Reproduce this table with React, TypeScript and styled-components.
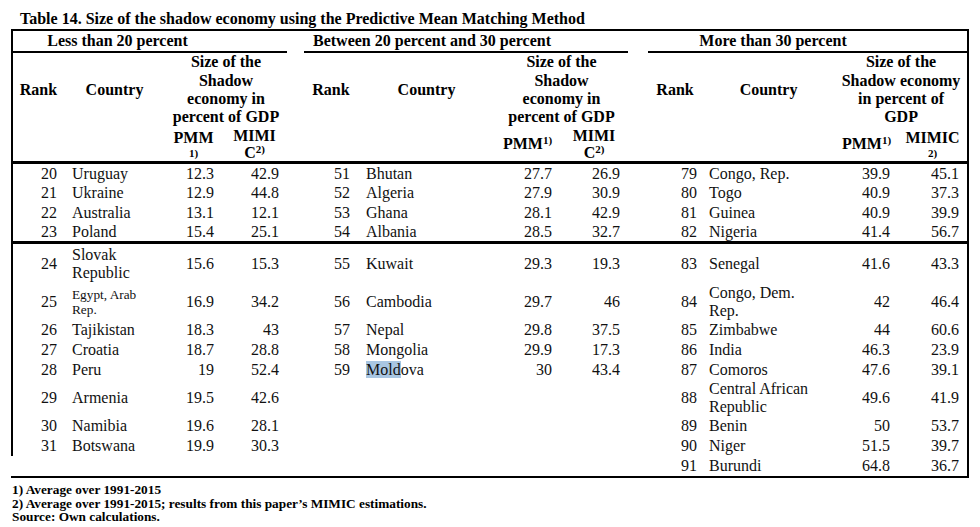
import { Fragment } from 'react';
import styled, { createGlobalStyle } from 'styled-components';

const GlobalStyle = createGlobalStyle`
  html, body {
    margin: 0;
    padding: 0;
    background: #ffffff;
  }
  body {
    font-family: "Liberation Serif", "Times New Roman", serif;
    color: #000000;
  }
`;

const Page = styled.div`
  width: 980px;
  height: 527px;
  padding: 10px 0 0 11px;
  box-sizing: border-box;
  overflow: hidden;
`;

const Title = styled.div`
  font-weight: bold;
  font-size: 16px;
  line-height: 18px;
  height: 19px;
  padding-left: 9px;
`;

const Table = styled.table`
  border-collapse: separate;
  border-spacing: 0;
  table-layout: fixed;
  width: 958px;
  font-size: 16px;
`;

type EdgeProps = { $l?: boolean; $r?: boolean };

const edges = (p: EdgeProps) => `
  border-left: ${p.$l ? '2px solid #000' : 'none'};
  border-right: ${p.$r ? '2px solid #000' : 'none'};
`;

const GroupHead = styled.th<EdgeProps & { $line?: boolean }>`
  ${edges}
  border-top: 2px solid #000;
  border-bottom: ${p => (p.$line ? '2px solid #000' : '2px solid transparent')};
  height: 20px;
  padding: 0;
  font-size: 16px;
  line-height: 18px;
  font-weight: bold;
  text-align: center;
  white-space: nowrap;
`;

const HeadCell = styled.th<EdgeProps>`
  ${edges}
  height: 74px;
  padding: 0;
  font-weight: bold;
  line-height: 18.4px;
  text-align: center;
  vertical-align: middle;
  white-space: nowrap;
`;

const SubHead = styled.th<EdgeProps>`
  ${edges}
  height: 34px;
  padding: 0;
  border-bottom: 3px solid #000;
  font-weight: bold;
  line-height: 18px;
  text-align: center;
  vertical-align: middle;
  white-space: nowrap;
`;

const SubLine = styled.div<{ $small?: boolean }>`
  height: ${p => (p.$small ? '14px' : '17px')};
  line-height: ${p => (p.$small ? '14px' : '17px')};
  font-size: ${p => (p.$small ? '11px' : '16px')};
`;

const Sup = styled.span`
  font-size: 11px;
  vertical-align: 5px;
  line-height: 0;
`;

const Row = styled.tr<{ $h: number }>`
  height: ${p => p.$h}px;
`;

const Cell = styled.td<EdgeProps & { $align?: 'left' | 'right'; $rule?: number; $pad?: number; $small?: boolean }>`
  ${edges}
  border-bottom: ${p => (p.$rule ? `${p.$rule}px solid #000` : 'none')};
  padding: 0 ${p => (p.$align === 'right' ? p.$pad ?? 8 : 0)}px 0 ${p => (p.$align === 'left' ? p.$pad ?? 8 : 0)}px;
  text-align: ${p => p.$align ?? 'left'};
  vertical-align: middle;
  font-size: ${p => (p.$small ? '13.3px' : '16px')};
  line-height: ${p => (p.$small ? '15px' : '18px')};
  white-space: pre-line;
  color: #111;
`;

const Hl = styled.span`
  background: #a9c6e2;
`;

const Notes = styled.div`
  margin-top: 5px;
  padding-left: 1px;
  font-size: 13.3px;
  line-height: 13.5px;
  font-weight: bold;
`;

type Entry = { rank: number; country: string; pmm: string; mimic: string; small?: boolean; hl?: boolean };
type DataRow = { h: number; rule?: number; noLeft?: boolean; g: (Entry | null)[] };

const e = (rank: number, country: string, pmm: string, mimic: string, extra: Partial<Entry> = {}): Entry => ({
  rank, country, pmm, mimic, ...extra,
});

const rows: DataRow[] = [
  { h: 19, g: [e(20, 'Uruguay', '12.3', '42.9'), e(51, 'Bhutan', '27.7', '26.9'), e(79, 'Congo, Rep.', '39.9', '45.1')] },
  { h: 20, g: [e(21, 'Ukraine', '12.9', '44.8'), e(52, 'Algeria', '27.9', '30.9'), e(80, 'Togo', '40.9', '37.3')] },
  { h: 20, g: [e(22, 'Australia', '13.1', '12.1'), e(53, 'Ghana', '28.1', '42.9'), e(81, 'Guinea', '40.9', '39.9')] },
  { h: 20, rule: 3, g: [e(23, 'Poland', '15.4', '25.1'), e(54, 'Albania', '28.5', '32.7'), e(82, 'Nigeria', '41.4', '56.7')] },
  { h: 40, g: [e(24, 'Slovak\nRepublic', '15.6', '15.3'), e(55, 'Kuwait', '29.3', '19.3'), e(83, 'Senegal', '41.6', '43.3')] },
  { h: 35, g: [e(25, 'Egypt, Arab\nRep.', '16.9', '34.2', { small: true }), e(56, 'Cambodia', '29.7', '46'), e(84, 'Congo, Dem.\nRep.', '42', '46.4')] },
  { h: 20, g: [e(26, 'Tajikistan', '18.3', '43'), e(57, 'Nepal', '29.8', '37.5'), e(85, 'Zimbabwe', '44', '60.6')] },
  { h: 20, g: [e(27, 'Croatia', '18.7', '28.8'), e(58, 'Mongolia', '29.9', '17.3'), e(86, 'India', '46.3', '23.9')] },
  { h: 20, g: [e(28, 'Peru', '19', '52.4'), e(59, 'Moldova', '30', '43.4', { hl: true }), e(87, 'Comoros', '47.6', '39.1')] },
  { h: 36, g: [e(29, 'Armenia', '19.5', '42.6'), null, e(88, 'Central African\nRepublic', '49.6', '41.9')] },
  { h: 20, g: [e(30, 'Namibia', '19.6', '28.1'), null, e(89, 'Benin', '50', '53.7')] },
  { h: 20, g: [e(31, 'Botswana', '19.9', '30.3'), null, e(90, 'Niger', '51.5', '39.7')] },
  { h: 22, rule: 2, noLeft: true, g: [null, null, e(91, 'Burundi', '64.8', '36.7')] },
];

const colWidths = [53, 101, 57, 65, 17, 54, 137, 65, 68, 20, 54, 133, 63, 71];
const rankPad = [7, 8, 5];
const countryPad = [8, 8, 7];

const groups = ['Less than 20 percent', 'Between 20 percent and 30 percent', 'More than 30 percent'];

function countryText(en: Entry) {
  if (en.hl) {
    return (
      <>
        <Hl>Mold</Hl>ova
      </>
    );
  }
  return en.country;
}

export default function App() {
  return (
    <Page>
      <GlobalStyle />
      <Title>Table 14. Size of the shadow economy using the Predictive Mean Matching Method</Title>
      <Table>
        <colgroup>
          {colWidths.map((w, i) => (
            <col key={i} style={{ width: w }} />
          ))}
        </colgroup>
        <thead>
          <tr>
            {groups.map((g, i) => (
              <Fragment key={i}>
                <GroupHead colSpan={3} $line $l={i === 0}>{g}</GroupHead>
                <GroupHead $line $r={i === 2} />
                {i < 2 && <GroupHead />}
              </Fragment>
            ))}
          </tr>
          <tr>
            <HeadCell $l>Rank</HeadCell>
            <HeadCell>Country</HeadCell>
            <HeadCell colSpan={2}>Size of the<br />Shadow<br />economy in<br />percent of GDP</HeadCell>
            <HeadCell />
            <HeadCell>Rank</HeadCell>
            <HeadCell>Country</HeadCell>
            <HeadCell colSpan={2}>Size of the<br />Shadow<br />economy in<br />percent of GDP</HeadCell>
            <HeadCell />
            <HeadCell>Rank</HeadCell>
            <HeadCell>Country</HeadCell>
            <HeadCell colSpan={2} $r>Size of the<br />Shadow economy<br />in percent of<br />GDP</HeadCell>
          </tr>
          <tr>
            <SubHead $l />
            <SubHead />
            <SubHead>
              <SubLine>PMM</SubLine>
              <SubLine $small>1)</SubLine>
            </SubHead>
            <SubHead>
              <SubLine>MIMI</SubLine>
              <SubLine>C<Sup>2)</Sup></SubLine>
            </SubHead>
            <SubHead />
            <SubHead />
            <SubHead />
            <SubHead>PMM<Sup>1)</Sup></SubHead>
            <SubHead>
              <SubLine>MIMI</SubLine>
              <SubLine>C<Sup>2)</Sup></SubLine>
            </SubHead>
            <SubHead />
            <SubHead />
            <SubHead />
            <SubHead>PMM<Sup>1)</Sup></SubHead>
            <SubHead $r>
              <SubLine>MIMIC</SubLine>
              <SubLine $small>2)</SubLine>
            </SubHead>
          </tr>
        </thead>
        <tbody>
          {rows.map((row, ri) => (
            <Row key={ri} $h={row.h}>
              {row.g.map((en, gi) => (
                <Fragment key={gi}>
                  <Cell $align="right" $pad={rankPad[gi]} $rule={row.rule} $l={gi === 0 && !row.noLeft}>
                    {en?.rank}
                  </Cell>
                  <Cell $align="left" $pad={countryPad[gi]} $rule={row.rule} $small={en?.small}>
                    {en ? countryText(en) : null}
                  </Cell>
                  <Cell $align="right" $rule={row.rule}>{en?.pmm}</Cell>
                  <Cell $align="right" $rule={row.rule} $r={gi === 2}>{en?.mimic}</Cell>
                  {gi < 2 && <Cell $rule={row.rule} />}
                </Fragment>
              ))}
            </Row>
          ))}
        </tbody>
      </Table>
      <Notes>
        1) Average over 1991-2015
        <br />
        2) Average over 1991-2015; results from this paper’s MIMIC estimations.
        <br />
        Source: Own calculations.
      </Notes>
    </Page>
  );
}
